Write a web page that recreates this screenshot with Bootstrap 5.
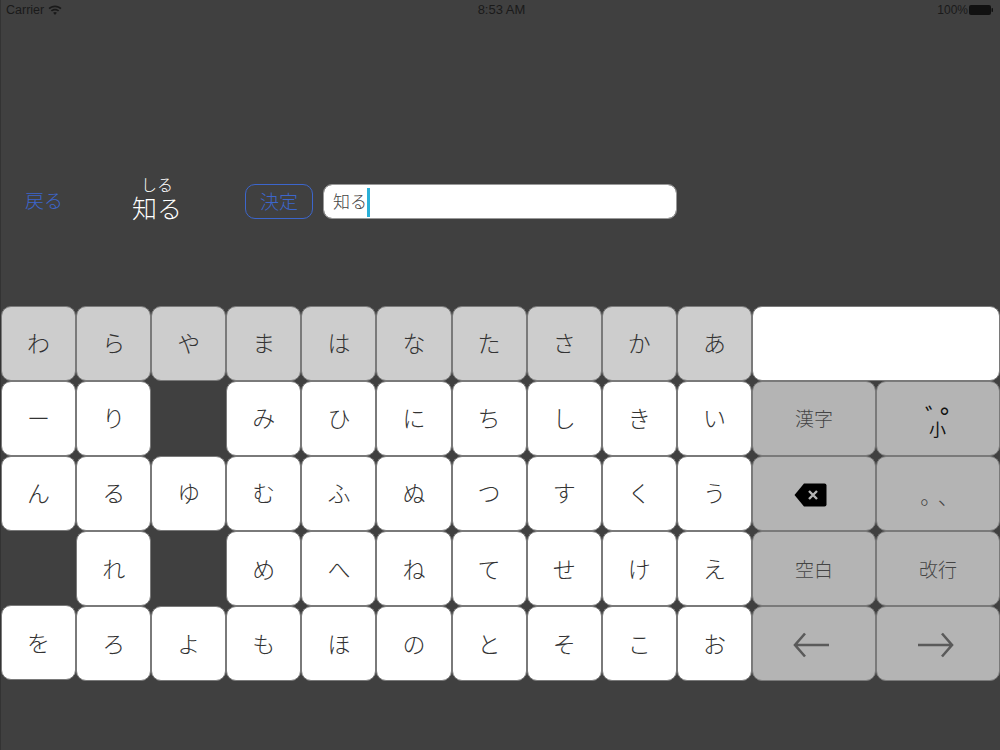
<!DOCTYPE html>
<html lang="ja">
<head>
  <meta charset="UTF-8" />
  <meta name="viewport" content="width=device-width, initial-scale=1.0" />
  <title>漢字入力</title>
  <link href="https://cdn.jsdelivr.net/npm/bootstrap@5.3.3/dist/css/bootstrap.min.css" rel="stylesheet">
  <style>
    body {
      background-color: #404040;
      width: 1000px;
      height: 750px;
      overflow: hidden;
      border-left: 1px solid #333;
      font-family: "Noto Sans CJK JP", "Liberation Sans", sans-serif;
      font-weight: 300;
    }

    .status-bar {
      height: 20px;
      padding: 0 7px 0 5px;
      color: #1a1a1a;
      font-family: "Liberation Sans", sans-serif;
      font-size: 12.5px;
      font-weight: 400;
    }

    .status-side { width: 200px; }
    .status-time { font-size: 13px; margin-left: 4px; }
    .status-pct { font-size: 12px; margin-right: -3px; }

    .quiz-row {
      height: 286px;
      padding: 164px 0 0 24px;
    }

    .back-link {
      width: 100px;
      height: 35px;
      padding-bottom: 2px;
      color: #3c66cc;
      font-size: 19px;
      text-decoration: none;
    }

    .word-box {
      width: 64px;
      margin-right: 56px;
      margin-top: -8px;
      color: #fff;
      line-height: 1;
    }

    .word-reading { font-size: 16px; height: 16px; }
    .word-kanji { font-size: 25px; height: 32px; line-height: 30px; }

    .ok-btn {
      width: 68px;
      height: 35px;
      margin-right: 10px;
      padding: 0 0 1px;
      color: #3c66cc;
      font-size: 19px;
      font-weight: 300;
      border: 1px solid #3c66cc;
      border-radius: 10px;
    }

    .answer-box {
      width: 354px;
      height: 35px;
      padding: 0 0 2px 9px;
      color: #444;
      font-size: 17px;
      font-weight: 300;
      border: 1px solid #999;
      border-radius: 9px;
    }

    .caret-bar {
      width: 3px;
      height: 29px;
      margin-top: 3px;
      background-color: #2ab0d8;
    }

    .key-grid {
      display: grid;
      grid-template-columns: repeat(10, 75.1px) repeat(2, 124px);
      grid-auto-rows: 75.1px;
      height: 376px;
    }

    .kana-key {
      display: flex;
      align-items: center;
      justify-content: center;
      padding-bottom: 2px;
      color: #333;
      font-size: 23px;
      background-color: #fff;
      border: 1px solid #7a7a7a;
      border-radius: 10px;
    }

    .key-top { background-color: #cdcdcd; }
    .key-wide { grid-column: span 2; }
    .key-func { background-color: #b4b4b4; color: #444; font-size: 19px; padding-bottom: 0; }
    .key-gap { visibility: hidden; }
    .key-lift { margin: -1px 0 1px; }

    .dakuten-mark {
      position: relative;
      width: 24px;
      height: 34px;
      color: #111;
      font-weight: 400;
      line-height: 1;
    }

    .mark-small { position: absolute; left: 3px; bottom: -1px; font-size: 17px; }
    .mark-daku { position: absolute; left: -1px; top: 2px; font-size: 24px; }
    .mark-handaku { position: absolute; left: 14px; top: 2px; font-size: 32px; }

    .punct-mark { margin: 4px 0 0 10px; font-size: 21px; letter-spacing: 7px; }
    .icon-nudge { margin: 2px 6px 0 0; }
    .arrow-nudge { margin: 3px 5px 0 0; }
  </style>
</head>
<body class="d-flex flex-column">

  <div class="status-bar d-flex align-items-center justify-content-between">
    <div class="status-side d-flex align-items-center gap-1">
      Carrier
      <svg width="14" height="11" viewBox="0 0 14 11" fill="#1a1a1a">
        <path d="M7 0.5C4.4 0.5 2.2 1.5 0.5 3L1.7 4.2C3.1 3 5 2.2 7 2.2S10.9 3 12.3 4.2L13.5 3C11.8 1.5 9.6 0.5 7 0.5Z"/>
        <path d="M7 3.8C5.4 3.8 3.9 4.4 2.8 5.4L4 6.6C4.8 5.9 5.9 5.5 7 5.5S9.2 5.9 10 6.6L11.2 5.4C10.1 4.4 8.6 3.8 7 3.8Z"/>
        <path d="M7 7C6.3 7 5.6 7.3 5.1 7.7L7 10L8.9 7.7C8.4 7.3 7.7 7 7 7Z"/>
      </svg>
    </div>
    <div class="status-time">8:53 AM</div>
    <div class="status-side d-flex align-items-center justify-content-end gap-1">
      <span class="status-pct">100%</span>
      <svg width="24" height="10" viewBox="0 0 24 10" fill="#111">
        <rect x="0" y="0" width="22" height="10" rx="2"/>
        <rect x="22.5" y="3" width="1.5" height="4" rx="0.7"/>
      </svg>
    </div>
  </div>

  <div class="quiz-row d-flex align-items-start">
    <a class="back-link d-flex align-items-center" href="#">戻る</a>
    <div class="word-box d-flex flex-column align-items-center">
      <div class="word-reading">しる</div>
      <div class="word-kanji">知る</div>
    </div>
    <button type="button" class="btn ok-btn">決定</button>
    <div class="answer-box form-control d-flex align-items-center">知る<span class="caret-bar"></span></div>
  </div>

  <div class="key-grid" id="teclado"></div>

  <script src="https://cdn.jsdelivr.net/npm/bootstrap@5.3.3/dist/js/bootstrap.bundle.min.js"></script>
  <script>
    const backspaceIcon = '<svg class="icon-nudge" width="33" height="24" viewBox="0 0 33 24"><path d="M10 0.5H30.5Q32.5 0.5 32.5 2.5V21.5Q32.5 23.5 30.5 23.5H10L0.5 12Z" fill="#000"/><path d="M15 8L23 16M23 8L15 16" stroke="#b4b4b4" stroke-width="2.4" fill="none"/></svg>';
    const arrowLeft = '<svg class="arrow-nudge" width="37" height="26" viewBox="0 0 37 26"><path d="M36 13H2M12 1.5L2 13L12 24.5" stroke="#5a5a5a" stroke-width="2.6" fill="none"/></svg>';
    const arrowRight = '<svg class="arrow-nudge" width="37" height="26" viewBox="0 0 37 26"><path d="M1 13H35M25 1.5L35 13L25 24.5" stroke="#5a5a5a" stroke-width="2.6" fill="none"/></svg>';
    const dakuten = '<span class="dakuten-mark"><span class="mark-daku">゛</span><span class="mark-handaku">゜</span><span class="mark-small">小</span></span>';
    const puntuacion = '<span class="punct-mark">。、</span>';

    const filas = [
      { kana: 'わらやまはなたさかあ', cls: 'key-top', extra: [['', 'key-wide']] },
      { kana: 'ーり みひにちしきい', extra: [['漢字', 'key-func'], [dakuten, 'key-func']] },
      { kana: 'んるゆむふぬつすくう', extra: [[backspaceIcon, 'key-func'], [puntuacion, 'key-func']] },
      { kana: ' れ めへねてせけえ', extra: [['空白', 'key-func'], ['改行', 'key-func']] },
      { kana: 'をろよもほのとそこお', extra: [[arrowLeft, 'key-func'], [arrowRight, 'key-func']] }
    ];

    const teclado = document.getElementById('teclado');

    function agregarTecla(html, cls) {
      const tecla = document.createElement('div');
      tecla.className = 'kana-key ' + cls;
      tecla.innerHTML = html;
      teclado.appendChild(tecla);
    }

    filas.forEach(fila => {
      [...fila.kana].forEach(k => {
        let cls = fila.cls || '';
        if (k === ' ') cls = 'key-gap';
        if (k === 'を') cls = 'key-lift';
        agregarTecla(k, cls);
      });
      fila.extra.forEach(e => agregarTecla(e[0], e[1]));
    });
  </script>

</body>
</html>
